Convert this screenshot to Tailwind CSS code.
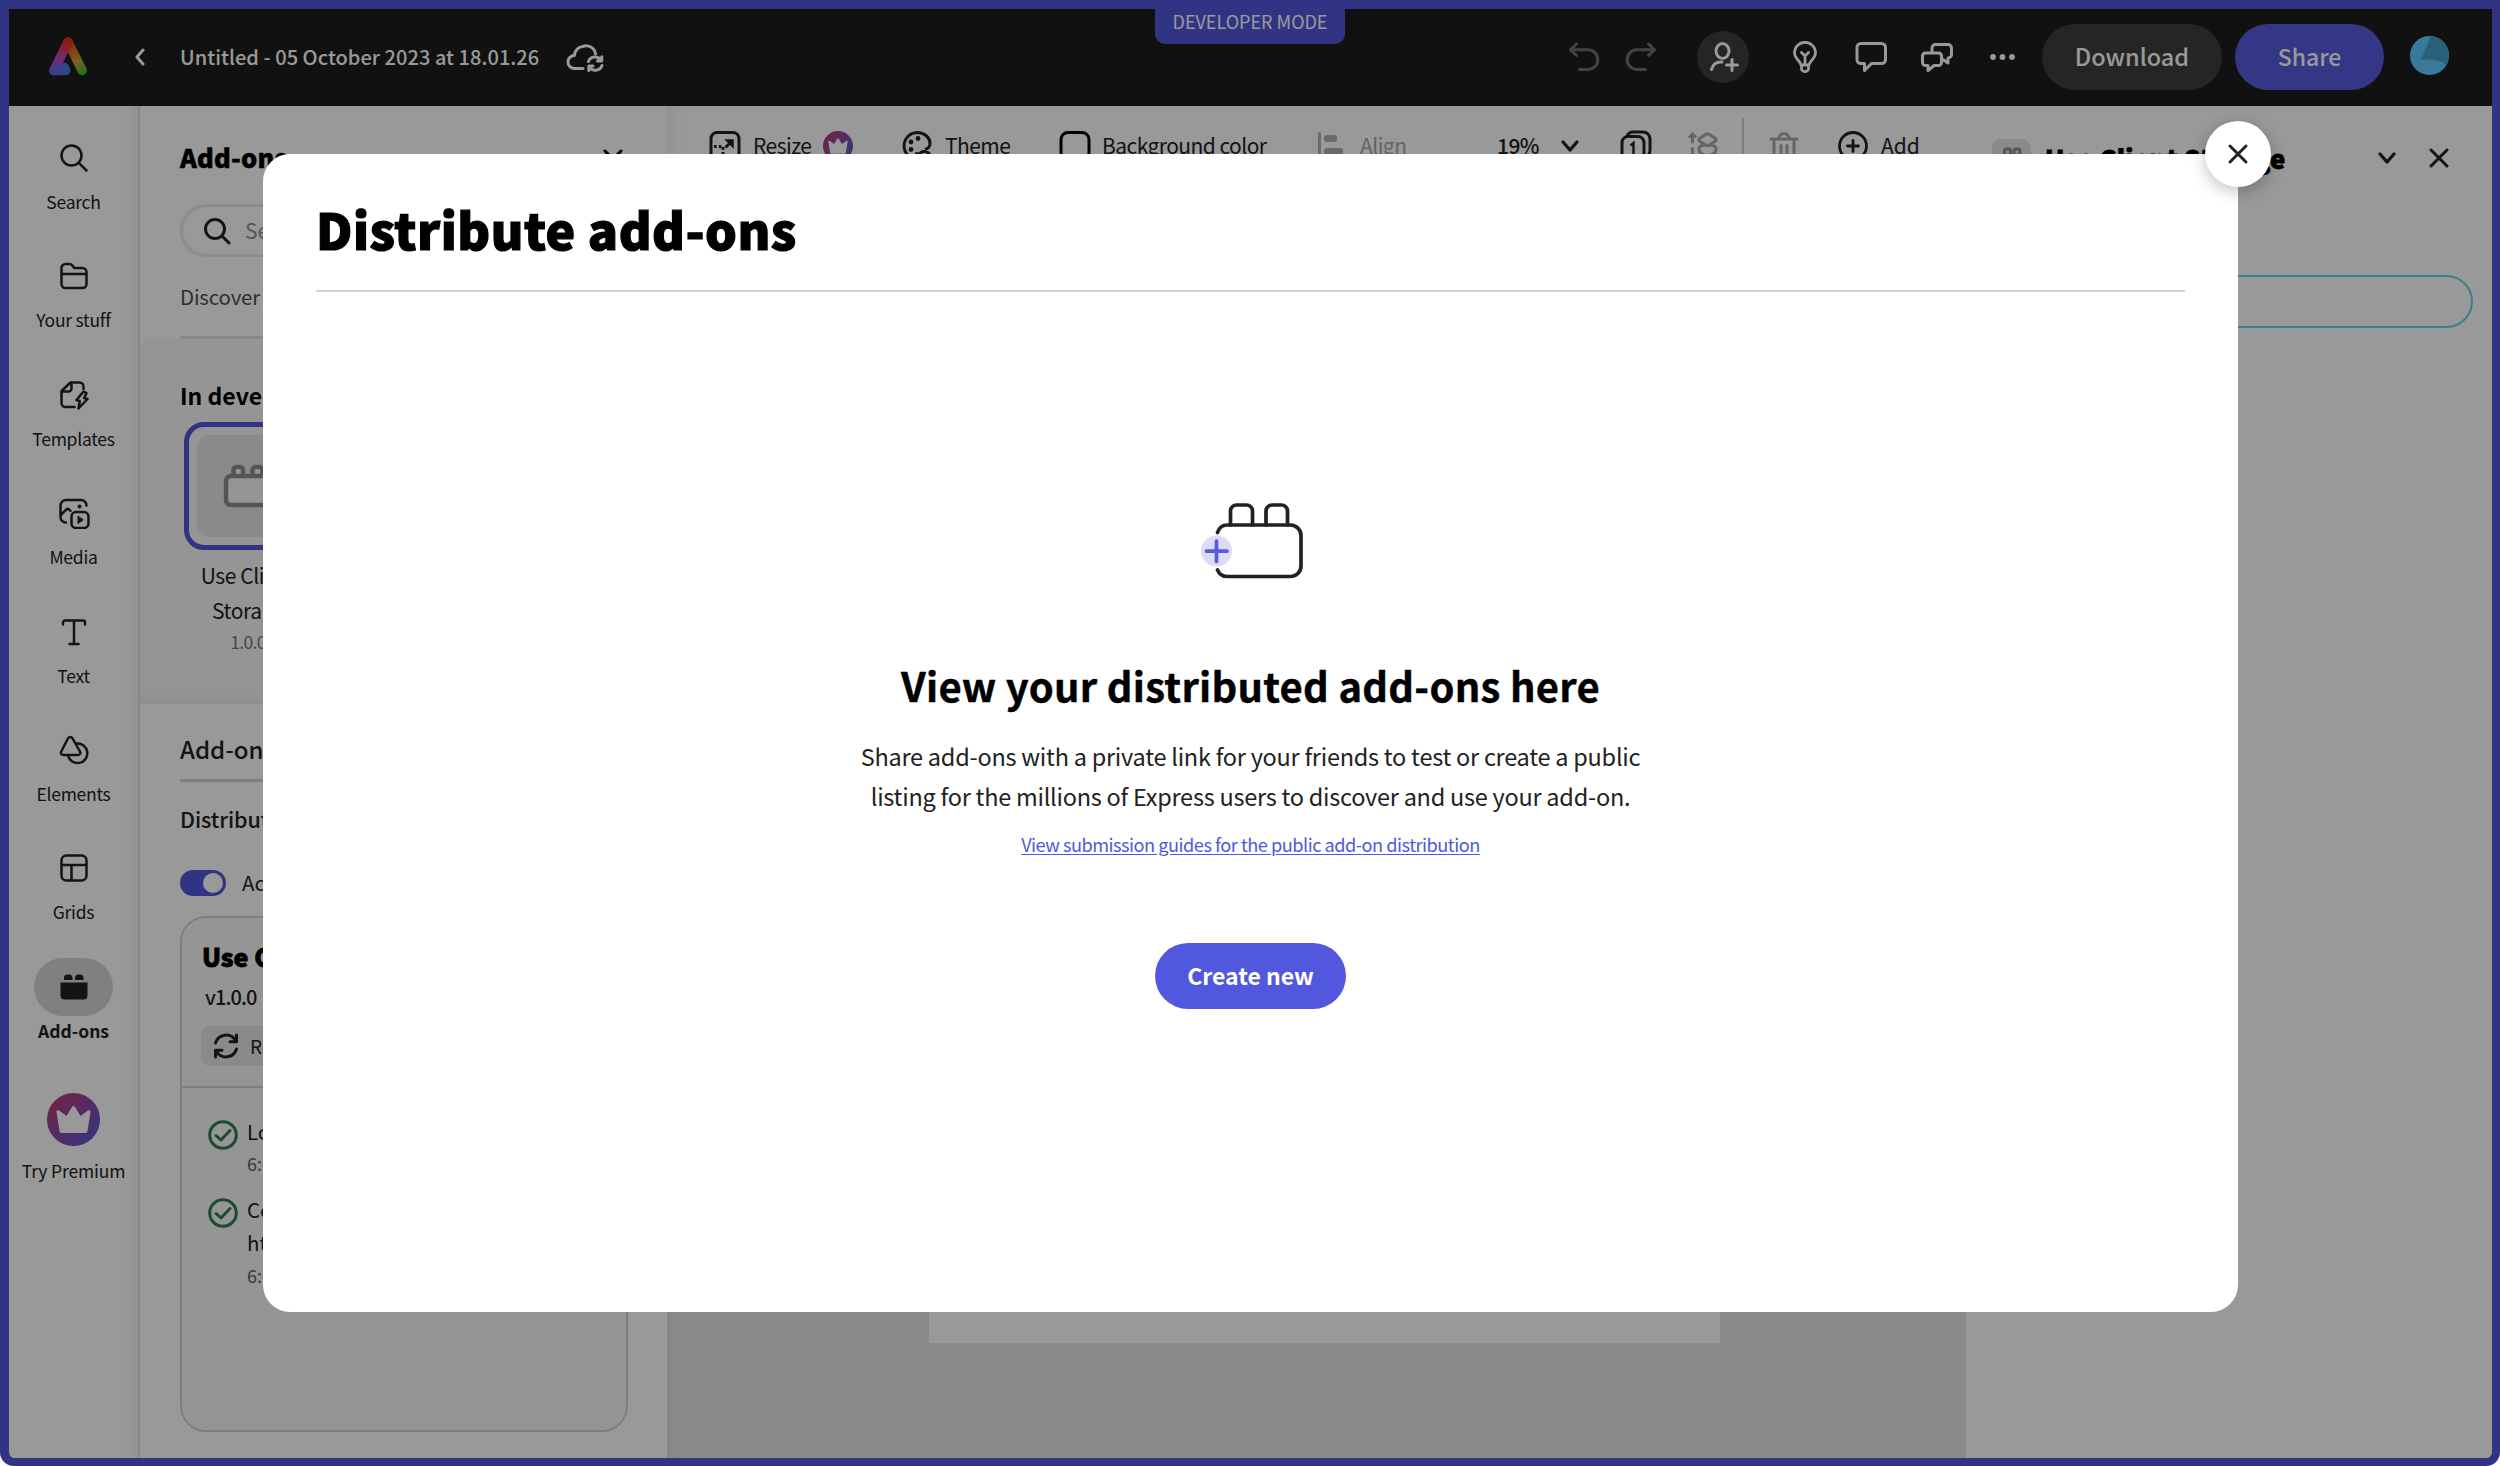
<!DOCTYPE html>
<html lang="en">
<head>
<meta charset="utf-8">
<title>Distribute add-ons</title>
<script src="https://cdn.jsdelivr.net/npm/@tailwindcss/browser@4"></script>
</head>
<body class="bg-white font-['Noto_Sans_CJK_SC','Noto_Sans',sans-serif] text-[#222] whitespace-nowrap">
<svg class="absolute size-0" aria-hidden="true">
  <defs>
    <linearGradient id="prem" x1="0" y1="0" x2="1" y2="1"><stop offset="0.1" stop-color="#b83c78"/><stop offset="1" stop-color="#5258e0"/></linearGradient>
    <linearGradient id="legL" gradientUnits="userSpaceOnUse" x1="20" y1="2" x2="8" y2="38"><stop offset="0" stop-color="#e82c10"/><stop offset=".3" stop-color="#e0364c"/><stop offset=".6" stop-color="#b84cc8"/><stop offset="1" stop-color="#6a62e0"/></linearGradient>
    <linearGradient id="legR" gradientUnits="userSpaceOnUse" x1="20" y1="2" x2="36" y2="38"><stop offset="0" stop-color="#e82c10"/><stop offset=".35" stop-color="#e06a28"/><stop offset=".65" stop-color="#c8a838"/><stop offset="1" stop-color="#3cb43c"/></linearGradient>
    <linearGradient id="foot" gradientUnits="userSpaceOnUse" x1="4" y1="34" x2="22" y2="34"><stop offset="0" stop-color="#7460e0"/><stop offset="1" stop-color="#3c80e0"/></linearGradient>
  </defs>
</svg>

<div class="relative h-[1466px] w-[2500px] overflow-hidden rounded-b-[14px] border-[8px] border-t-[9px] border-l-[9px] border-[#5258dd] bg-white">
  <div class="flex h-full flex-col">

    <!-- Header -->
    <header class="flex h-[97px] shrink-0 items-center bg-[#1d1d1d] pb-[1px] text-white">
      <svg class="mb-[2px] ml-[39px] size-[40px] shrink-0" viewBox="0 0 40 40" fill="none" stroke-linecap="round" stroke-linejoin="round" stroke-width="9.5">
        <path d="M20 6 34.2 34.6" stroke="url(#legR)"/>
        <path d="M20 6 5.8 34.6" stroke="url(#legL)"/>
        <path d="M6 34.600H17.600L16.500 31.500" stroke="url(#foot)"/>
      </svg>
      <svg class="ml-[46px] h-[18px] w-[12px] shrink-0" viewBox="0 0 12 18" fill="none" stroke="currentColor" stroke-width="3" stroke-linecap="round" stroke-linejoin="round"><path d="M9 2 3 9l6 7"/></svg>
      <span class="ml-[34px] w-[359px] shrink-0 text-[20px] font-medium tracking-[0.04px]">Untitled - 05 October 2023 at 18.01.26</span>
      <svg class="ml-[27px] h-[30px] w-[40px] shrink-0" viewBox="0 0 40 30" fill="none" stroke="currentColor" stroke-width="3" stroke-linecap="round" stroke-linejoin="round">
        <path d="M17 26.5H8.500A6.500 6.500 0 0 1 8.500 13.500 9.200 9.200 0 0 1 16.500 4.500 9.500 9.500 0 0 1 29.500 12"/>
        <path d="M22.500 19.500a7 7 0 0 1 12.500-1.200M35.800 14.800V19H31.500M36 23.500a7 7 0 0 1-12.500 1.500M22.800 28.500V24H27"/>
      </svg>
      <div class="ml-auto flex shrink-0 items-center">
        <svg class="h-[30px] w-[32px] text-[#707070]" viewBox="0 0 32 30" fill="none" stroke="currentColor" stroke-width="3" stroke-linecap="round" stroke-linejoin="round"><path d="M8.500 2 2.500 7.800 8.500 13.500M3 7.800H20a9.800 9.800 0 0 1 0 19.600H11.500"/></svg>
        <svg class="ml-[25px] h-[30px] w-[32px] text-[#707070]" viewBox="0 0 32 30" fill="none" stroke="currentColor" stroke-width="3" stroke-linecap="round" stroke-linejoin="round"><path d="M23.500 2 29.500 7.800 23.500 13.500M29 7.800H12a9.800 9.800 0 0 0 0 19.600h8.500"/></svg>
        <div class="ml-[40px] flex size-[52px] items-center justify-center rounded-full bg-[#3e3e3e]">
          <svg class="h-[32px] w-[32px]" viewBox="0 0 32 32" fill="none" stroke="currentColor" stroke-width="3" stroke-linecap="round"><ellipse cx="15.500" cy="10" rx="6.500" ry="7.500"/><path d="M4.500 28.500c1.500-5.500 5-8 10.500-7.500M25 18.500V29.500M19.500 24H30.500"/></svg>
        </div>
        <svg class="ml-[43px] h-[32px] w-[26px]" viewBox="0 0 26 32" fill="none" stroke="currentColor" stroke-width="2.800" stroke-linecap="round" stroke-linejoin="round"><path d="M9 24C8.500 20 2.500 17.500 2.500 11.800a10.500 10.500 0 0 1 21 0C23.500 17.500 17.500 20 17 24ZM9.500 24.500V27.500a3 3 0 0 0 3 3h1a3 3 0 0 0 3-3V24.500M13 23V15M9.500 11.500 13 15 16.500 11.500"/></svg>
        <svg class="ml-[37px] h-[32px] w-[32px]" viewBox="0 0 32 32" fill="none" stroke="currentColor" stroke-width="3" stroke-linejoin="round"><path d="M6 2.500H26.500a4 4 0 0 1 4 4V18.500a4 4 0 0 1-4 4H16.500L9.500 29.500V22.500H6a4 4 0 0 1-4-4V6.500a4 4 0 0 1 4-4Z"/></svg>
        <svg class="ml-[34px] h-[32px] w-[32px]" viewBox="0 0 32 32" fill="none" stroke="currentColor" stroke-width="3" stroke-linejoin="round" stroke-linecap="round"><path d="M4.500 12H17.500a3 3 0 0 1 3 3V21.500a3 3 0 0 1-3 3H13L7 29.500V24.500H4.500a3 3 0 0 1-3-3V15a3 3 0 0 1 3-3ZM11 11.500V7a3.500 3.500 0 0 1 3.500-3.500H27A3.500 3.500 0 0 1 30.500 7V13.500A3.500 3.500 0 0 1 27 17V22L22 18.500"/></svg>
        <svg class="ml-[35px] h-[8px] w-[30px]" viewBox="0 0 30 8" fill="currentColor"><circle cx="5" cy="4" r="2.900"/><circle cx="14.500" cy="4" r="2.900"/><circle cx="24" cy="4" r="2.900"/></svg>
        <div class="ml-[24px] flex h-[66px] w-[180px] items-center justify-center rounded-full bg-[#3e3e3e] text-[23.500px] font-medium">Download</div>
        <div class="ml-[13px] flex h-[66px] w-[149px] items-center justify-center rounded-full bg-[#585de0] pb-[1px] text-[23px] font-medium">Share</div>
        <svg class="mr-[43px] mb-[3px] ml-[26px] size-[39px]" viewBox="0 0 39 39"><circle cx="19.500" cy="19.500" r="19.500" fill="#5fcaff"/><path d="M21 .1A19.500 19.500 0 0 1 36 30C34 25 28 23.500 11 23.500Z" fill="#46a0c8"/></svg>
      </div>
    </header>

    <div class="flex min-h-0 flex-1">
      <!-- Navigation rail -->
      <nav class="flex w-[131px] shrink-0 flex-col items-center border-r-2 border-[#e1e1e1] pt-[23px] text-[17.500px] leading-[24px] tracking-[-0.25px] shadow-[inset_-14px_0_14px_-12px_rgba(0,0,0,0.06)]">
        <div class="flex h-[118.400px] flex-col items-center gap-[3px]"><div class="flex h-[58px] w-[79px] items-center justify-center"><svg class="size-[30px]" viewBox="0 0 30 30" fill="none" stroke="currentColor" stroke-width="2.500" stroke-linecap="round"><circle cx="12.500" cy="12.500" r="10"/><path d="M19.800 19.800 27.500 27.500"/></svg></div>Search</div>
        <div class="flex h-[118.400px] flex-col items-center gap-[3px]"><div class="flex h-[58px] w-[79px] items-center justify-center"><svg class="size-[30px]" viewBox="0 0 30 30" fill="none" stroke="currentColor" stroke-width="2.500" stroke-linejoin="round"><path d="M2.500 12V7a4 4 0 0 1 4-4H10.500c1.200 0 2 .4 2.800 1.300L15.200 7H23.500a4 4 0 0 1 4 4V23a4 4 0 0 1-4 4H6.500a4 4 0 0 1-4-4V12M2.500 13H27.500"/></svg></div>Your stuff</div>
        <div class="flex h-[118.400px] flex-col items-center gap-[3px]"><div class="flex h-[58px] w-[79px] items-center justify-center"><svg class="size-[30px]" viewBox="0 0 30 30" fill="none" stroke="currentColor" stroke-width="2.500" stroke-linejoin="round" stroke-linecap="round"><path d="M24.500 9V6.500a4 4 0 0 0-4-4H11.500L2.500 11V23a4 4 0 0 0 4 4H15.500M12.500 2.500V8.500a3 3 0 0 1-3 3H2.500M24.500 11.500 17.500 20 20.800 21 19.500 28.500 28.500 19 25.200 18 27.500 13Z"/></svg></div>Templates</div>
        <div class="flex h-[118.400px] flex-col items-center gap-[3px]"><div class="flex h-[58px] w-[79px] items-center justify-center"><svg class="size-[32px]" viewBox="0 0 32 32" fill="none" stroke="currentColor" stroke-width="2.500" stroke-linejoin="round" stroke-linecap="round"><path d="M8 25.500A5.500 5.500 0 0 1 2.500 20V8.500A5.500 5.500 0 0 1 8 3H23A5.500 5.500 0 0 1 28.500 8.500M2.800 18 8 12.800a2.500 2.500 0 0 1 3.500 0L12.500 13.800"/><circle cx="21.500" cy="9.500" r="2" fill="currentColor" stroke="none"/><rect x="13.500" y="15" width="17" height="16" rx="4.500"/><path d="M20 19.500V26.500L25 23Z" fill="currentColor" stroke-width="1"/></svg></div>Media</div>
        <div class="flex h-[118.400px] flex-col items-center gap-[3px]"><div class="flex h-[58px] w-[79px] items-center justify-center"><svg class="size-[30px]" viewBox="0 0 30 30" fill="none" stroke="currentColor" stroke-width="2.500" stroke-linejoin="round" stroke-linecap="round"><path d="M4 7.500V5.500A2 2 0 0 1 6 3.500H24A2 2 0 0 1 26 5.500V7.500M15 3.500V27M10.500 27H19.500"/></svg></div>Text</div>
        <div class="flex h-[118.400px] flex-col items-center gap-[3px]"><div class="flex h-[58px] w-[79px] items-center justify-center"><svg class="size-[30px]" viewBox="0 0 30 30" fill="none" stroke="currentColor" stroke-width="2.500" stroke-linejoin="round" stroke-linecap="round"><path d="M9 3.300 2.300 16.500A2.300 2.300 0 0 0 4.300 20H19A2.300 2.300 0 0 0 21 16.500L13.500 3.300A2.600 2.600 0 0 0 9 3.300ZM17.500 8.500A9.800 9.800 0 1 1 9 20.500"/></svg></div>Elements</div>
        <div class="flex h-[118.400px] flex-col items-center gap-[3px]"><div class="flex h-[58px] w-[79px] items-center justify-center"><svg class="size-[30px]" viewBox="0 0 30 30" fill="none" stroke="currentColor" stroke-width="2.500"><rect x="2.500" y="2.500" width="25" height="25" rx="5"/><path d="M2.500 12H27.500M12.500 12V27.500"/></svg></div>Grids</div>
        <div class="flex h-[118.400px] flex-col items-center gap-[3px] font-bold tracking-normal"><div class="flex h-[58px] w-[79px] items-center justify-center rounded-full bg-[#d5d5d5]"><svg class="size-[30px]" viewBox="0 0 30 30" fill="currentColor"><path d="M5 8V6A3.500 3.500 0 0 1 8.500 2.500H10A3.500 3.500 0 0 1 13.500 6V8ZM16 8V6A3.500 3.500 0 0 1 19.500 2.500H21A3.500 3.500 0 0 1 24.500 6V8ZM1.500 10.500H28.500V23.500a4 4 0 0 1-4 4H5.500a4 4 0 0 1-4-4Z"/></svg></div>Add-ons</div>
        <svg class="mt-[17px] size-[53px]" viewBox="0 0 53 53"><circle cx="26.500" cy="26.500" r="26.500" fill="url(#prem)"/><path d="M9.500 19c-.5-1.500 1.200-2.300 2.500-1.400L19.500 23 25 14c.7-1.300 2.300-1.300 3 0L33.500 23 41 17.600c1.300-.9 3-.1 2.500 1.400L40.500 38c-.2 1.200-1 2-2.200 2H14.700c-1.200 0-2-.8-2.200-2Z" fill="#fff"/></svg>
        <span class="mt-[13px] tracking-[-0.15px]">Try Premium</span>
      </nav>

      <!-- Add-ons panel -->
      <section class="flex w-[527px] shrink-0 flex-col">
        <div class="flex h-[233px] flex-col pl-[40px] pr-[40px]">
          <div class="mt-[35px] flex h-[32px] items-center justify-between text-[25.500px] leading-[32px] font-black tracking-[0.2px] text-black [-webkit-text-stroke:0.5px_black]">Add-ons
            <svg class="mr-[3px] mb-[4px] h-[14px] w-[22px]" viewBox="0 0 22 14" fill="none" stroke="currentColor" stroke-width="3" stroke-linecap="round" stroke-linejoin="round"><path d="M3 3 11 11 19 3"/></svg>
          </div>
          <div class="mt-[31px] flex h-[53px] shrink-0 items-center rounded-full border-[3px] border-[#eaeaea] pl-[20px] text-[21px] text-[#909090]">
            <svg class="size-[28px] text-[#222]" viewBox="0 0 28 28" fill="none" stroke="currentColor" stroke-width="3" stroke-linecap="round"><circle cx="12" cy="12" r="9.500"/><path d="M19 19 26 26"/></svg>
            <span class="ml-[14px]">Search</span>
          </div>
          <div class="mt-[23px] text-[20.500px] leading-[32px] tracking-[-0.2px] text-[#505050]">Discover</div>
          <div class="mt-auto h-[3px] bg-[#e4e4e4]"></div>
        </div>
        <div class="flex h-[365px] flex-col bg-[#f8f8f8] pl-[40px] shadow-[inset_0_-14px_14px_-12px_rgba(0,0,0,0.08)]">
          <div class="mt-[41px] text-[23px] leading-[30px] font-bold text-black">In development</div>
          <div class="mt-[12px] ml-[4px] flex w-[128px] flex-col items-center">
            <div class="flex size-[128px] items-center justify-center rounded-[20px] border-[5px] border-[#5258dd]">
              <div class="flex size-[102px] items-center justify-center rounded-[13px] bg-[#e6e6e6]">
                <svg class="h-[44px] w-[50px]" viewBox="0 0 50 44" fill="#f8f8f8" stroke="#8e8e8e" stroke-width="4.500"><path d="M10.500 12V6A3 3 0 0 1 13.500 3H17A3 3 0 0 1 20 6V12M29.500 12V6A3 3 0 0 1 32.500 3H36A3 3 0 0 1 39.500 6V12"/><rect x="3" y="12" width="44" height="29" rx="5"/></svg>
              </div>
            </div>
            <div class="mt-[8px] text-[21px] leading-[34.500px] tracking-[-0.4px]">Use Client</div>
            <div class="text-[21px] leading-[34.500px] tracking-[-0.4px]">Storage</div>
            <div class="mt-[1px] text-[17.500px] leading-[28px] tracking-[-0.7px] text-[#757575]">1.0.0</div>
          </div>
        </div>
        <div class="flex min-h-0 flex-1 flex-col pr-[39px] pb-[26px] pl-[40px]">
          <div class="mt-[30px] text-[24px] leading-[30px] font-medium">Add-on development</div>
          <div class="mt-[15px] h-[3px] shrink-0 rounded-full bg-[#d3d3d3]"></div>
          <div class="mt-[22px] text-[21.500px] leading-[30px] font-medium tracking-[-0.1px]">Distribute</div>
          <div class="mt-[29px] flex h-[40px] shrink-0 items-center text-[20.500px]">
            <span class="flex h-[26px] w-[46px] items-center justify-end rounded-full bg-[#5258dd] pr-[3px]"><span class="size-[20px] rounded-full bg-white"></span></span>
            <span class="mb-[2px] ml-[16px]">Active</span>
          </div>
          <div class="mt-[13px] flex flex-1 flex-col rounded-[26px] border-2 border-[#d3d3d3] bg-[#f8f8f8]">
            <div class="flex h-[170px] shrink-0 flex-col border-b-2 border-[#d3d3d3] pl-[19px]">
              <div class="mt-[23px] pl-[1px] text-[25px] leading-[30px] font-black text-black [-webkit-text-stroke:0.8px_black]">Use Client Storage</div>
              <div class="mt-[13px] pl-[4px] text-[20px] leading-[26px] font-medium tracking-[-0.9px]">v1.0.0</div>
              <div class="mt-[16px] flex h-[40px] w-[140px] items-center rounded-[9px] bg-[#e6e6e6] text-[19px]">
                <svg class="ml-[11px] size-[28px]" viewBox="0 0 28 28" fill="none" stroke="currentColor" stroke-width="3" stroke-linecap="round" stroke-linejoin="round"><path d="M3.500 11A11 11 0 0 1 23.500 8.500M24.500 3V9.800H18M24.500 17A11 11 0 0 1 4.500 19.500M3.500 25V18.200H10"/></svg>
                <span class="ml-[10px]">Refresh</span>
              </div>
            </div>
            <div class="mt-[31px] flex pl-[26px] leading-[32px]">
              <svg class="mt-[1px] size-[30px]" viewBox="0 0 30 30" fill="none" stroke="#2d7d50" stroke-width="3" stroke-linecap="round" stroke-linejoin="round"><circle cx="15" cy="15" r="13.300"/><path d="M8 15.500 13 20 22 10.500"/></svg>
              <div class="-mt-[4px] ml-[9px] text-[20.500px]">Loaded<div class="text-[18px] leading-[32px] text-[#606060]">6:01:20</div></div>
            </div>
            <div class="mt-[18px] flex pl-[26px] leading-[33px]">
              <svg class="mt-[1px] size-[30px]" viewBox="0 0 30 30" fill="none" stroke="#2d7d50" stroke-width="3" stroke-linecap="round" stroke-linejoin="round"><circle cx="15" cy="15" r="13.300"/><path d="M8 15.500 13 20 22 10.500"/></svg>
              <div class="-mt-[4px] ml-[9px] text-[20.500px]">Connected<div>https</div><div class="text-[18px] leading-[33px] text-[#606060]">6:01:20</div></div>
            </div>
          </div>
        </div>
      </section>

      <!-- Editor -->
      <main class="flex min-w-0 flex-1 flex-col bg-[#e6e6e6] shadow-[inset_14px_0_14px_-12px_rgba(0,0,0,0.06)]">
        <div class="flex h-[80px] shrink-0 items-center bg-white pl-[42px] text-[21px] tracking-[-0.55px] shadow-[inset_14px_0_14px_-10px_rgba(0,0,0,0.06)]">
          <svg class="h-[30px] w-[32px] shrink-0" viewBox="0 0 32 30" fill="none" stroke="currentColor" stroke-width="3"><rect x="2" y="1.500" width="28" height="27" rx="6"/><path d="M17 9H24V16Z" fill="currentColor" stroke-width="1.500"/><path d="M21 12 16.500 16.500"/><path d="M5 15.500H14V25" stroke-dasharray="2.600 2.200"/></svg>
          <span class="ml-[12px] w-[60px] shrink-0">Resize</span>
          <svg class="ml-[10px] size-[30px] shrink-0" viewBox="0 0 53 53"><circle cx="26.500" cy="26.500" r="26.500" fill="url(#prem)"/><path d="M9.500 19c-.5-1.500 1.200-2.300 2.500-1.400L19.500 23 25 14c.7-1.300 2.300-1.300 3 0L33.500 23 41 17.600c1.300-.9 3-.1 2.500 1.400L40.500 38c-.2 1.200-1 2-2.200 2H14.700c-1.200 0-2-.8-2.200-2Z" fill="#fff"/></svg>
          <svg class="ml-[49px] size-[30px] shrink-0" viewBox="0 0 30 30" fill="none" stroke="currentColor" stroke-width="3"><path d="M15 1.500A13.300 13.300 0 1 0 16 28.300c3 0 2-3.500 2-5 0-3 4-3 6-3l4 3M15 1.500c7.500 0 13 5 13 11 0 4-2 5-5 6"/><g fill="currentColor" stroke="none"><circle cx="9" cy="11" r="2.400"/><circle cx="16" cy="7.500" r="2.400"/><circle cx="9" cy="18.500" r="2.400"/><circle cx="15" cy="23.500" r="2.400"/></g></svg>
          <span class="ml-[13px] w-[66px] shrink-0">Theme</span>
          <svg class="ml-[48px] h-[30px] w-[32px] shrink-0" viewBox="0 0 32 30" fill="none" stroke="#000" stroke-width="3"><rect x="2" y="1.500" width="28" height="27" rx="7"/></svg>
          <span class="ml-[11px] w-[167px] shrink-0">Background color</span>
          <svg class="ml-[49px] h-[28px] w-[26px] shrink-0" viewBox="0 0 26 28" fill="#b0b0b0"><rect x="0" y="0" width="3" height="28" rx="1.500"/><rect x="6" y="3" width="13" height="7" rx="3"/><rect x="6" y="16" width="19" height="7" rx="3"/></svg>
          <span class="ml-[16px] w-[48px] shrink-0 text-[#a8a8a8]">Align</span>
          <span class="ml-[89px] w-[41px] shrink-0 font-medium">19%</span>
          <svg class="ml-[22px] h-[14px] w-[20px] shrink-0" viewBox="0 0 20 14" fill="none" stroke="currentColor" stroke-width="3.300" stroke-linecap="round" stroke-linejoin="round"><path d="M3 3 10 11 17 3"/></svg>
          <svg class="ml-[40px] h-[32px] w-[32px] shrink-0" viewBox="0 0 32 32" fill="none" stroke="currentColor" stroke-width="3"><path d="M7 6.500C8 3.500 10 2 13 2H23A7 7 0 0 1 30 9V20C30 23 28.500 25.500 26 26.500"/><rect x="2" y="6.500" width="22" height="24" rx="6"/><path d="M10.500 15.500 13.500 13V25" stroke-width="2.400"/></svg>
          <svg class="ml-[34px] h-[32px] w-[36px] shrink-0 text-[#a8a8a8]" viewBox="0 0 36 32" fill="none" stroke="currentColor" stroke-width="3" stroke-linejoin="round" stroke-linecap="round"><path d="M6.500 12V6M6.500 18.500V28"/><path d="M2.800 7 6.500 3 10.200 7ZM2.800 25 6.500 29 10.200 25Z" fill="currentColor" stroke-width="1.500"/><path d="M20 4.200a3 3 0 0 1 3 0L29.500 8.500a1.500 1.500 0 0 1 0 2.500L23 15.200a3 3 0 0 1-3 0L13.500 11a1.500 1.500 0 0 1 0-2.500ZM18.500 14.800C14 16 12.500 17.500 13 19L13.500 22 20 26.500a3 3 0 0 0 3 0L29.500 22 30 19C30.500 17.500 29 16 24.500 14.800"/></svg>
          <div class="ml-[20px] h-[56px] w-[2px] shrink-0 bg-[#d0d0d0]"></div>
          <svg class="ml-[24px] h-[30px] w-[32px] shrink-0 text-[#a8a8a8]" viewBox="0 0 32 30" fill="none" stroke="currentColor" stroke-width="3" stroke-linecap="round" stroke-linejoin="round"><path d="M3 8H29M11 7.500A5 5 0 0 1 21 7.500M6 8V28.500H26V8M13 14.500V23M19 14.500V23"/></svg>
          <svg class="ml-[38px] size-[30px] shrink-0" viewBox="0 0 30 30" fill="none" stroke="currentColor" stroke-width="2.800" stroke-linecap="round"><circle cx="15" cy="15" r="13.500"/><path d="M15 9.500V20.500M9.500 15H20.500"/></svg>
          <span class="ml-[13px] tracking-normal">Add</span>
        </div>
        <div class="mt-[40px] ml-[262px] h-[1117px] w-[791px] shrink-0 bg-white"></div>
      </main>

      <!-- Add-on panel -->
      <aside class="flex w-[526px] shrink-0 flex-col bg-white">
        <div class="mt-[32px] flex h-[40px] shrink-0 items-center pl-[26px]">
          <div class="flex size-[39px] items-center justify-center rounded-[9px] bg-[#e6e6e6]"><svg class="h-[22px] w-[24px]" viewBox="0 0 24 22" fill="none" stroke="#8e8e8e" stroke-width="3"><path d="M4.500 8V4A2 2 0 0 1 6.500 2H8.500A2 2 0 0 1 10.500 4V8M14 8V4A2 2 0 0 1 16 2H18A2 2 0 0 1 20 4V8"/><rect x="2" y="8" width="20" height="12" rx="2"/></svg></div>
          <span class="ml-[14px] w-[240px] text-[25.500px] font-black tracking-[0.28px] text-black [-webkit-text-stroke:0.8px_black]">Use Client Storage</span>
          <svg class="ml-[92px] h-[14px] w-[20px]" viewBox="0 0 20 14" fill="none" stroke="currentColor" stroke-width="3.300" stroke-linecap="round" stroke-linejoin="round"><path d="M3 3 10 11 17 3"/></svg>
          <svg class="ml-[32px] size-[20px]" viewBox="0 0 20 20" fill="none" stroke="currentColor" stroke-width="3" stroke-linecap="round"><path d="M2 2 18 18M18 2 2 18"/></svg>
        </div>
        <div class="mt-[97px] mr-[19px] ml-[20px] h-[53px] rounded-full border-2 border-[#62d4dc]"></div>
      </aside>
    </div>
  </div>

  <!-- Developer badge -->
  <div class="absolute top-0 left-[1146px] flex h-[35px] w-[190px] items-center justify-center rounded-b-[10px] bg-[#5258dd] pb-[10px] text-[18px] text-white">DEVELOPER MODE</div>
</div>

<!-- Backdrop -->
<div class="absolute inset-0 rounded-b-[14px] bg-black/40"></div>

<!-- Dialog -->
<div role="dialog" class="absolute top-[154px] left-[263px] flex h-[1158px] w-[1975px] flex-col items-center rounded-[27px] bg-white">
  <div class="flex h-[138px] w-[1869px] shrink-0 items-center border-b-2 border-[#d3d3d3] pt-[17px] pb-[5px] text-[50px] leading-[60px] font-black tracking-[0.5px] text-black [-webkit-text-stroke:1.2px_black]">
    <h1>Distribute add-ons</h1>
  </div>
  <svg class="mt-[207px] mr-[1px] h-[82px] w-[110px] shrink-0" viewBox="0 0 110 82" fill="none" stroke="#222" stroke-width="3.700" stroke-linecap="round">
    <path d="M22.500 33.500C24 29 27.500 26 32 26H95.500A10.500 10.500 0 0 1 106 36.500V66.500A10.500 10.500 0 0 1 95.500 77.500H32C27.500 77.500 24 74.500 22.500 71"/>
    <path d="M35.500 26V12A6 6 0 0 1 41.500 6H51.500A6 6 0 0 1 57.500 12V26M71 26V12A6 6 0 0 1 77 6H86.500A6 6 0 0 1 92.500 12V26"/>
    <circle cx="21.500" cy="52" r="15.500" fill="#dddcf7" stroke="none"/><path d="M21.500 42V62.500M11.500 52.200H32" stroke="#5a5bdc"/>
  </svg>
  <h2 class="mt-[76px] text-[40px] leading-[56px] font-bold tracking-[0.25px] text-black [-webkit-text-stroke:0.4px_black]">View your distributed add-ons here</h2>
  <p class="mt-[24px] text-center text-[23.500px] leading-[39.500px] tracking-[-0.25px]">Share add-ons with a private link for your friends to test or create a public<br>listing for the millions of Express users to discover and use your add-on.</p>
  <a class="mt-[14px] text-[18.200px] leading-[28px] tracking-[-0.5px] text-[#5258dd] underline underline-offset-2">View submission guides for the public add-on distribution</a>
  <button class="mt-[85px] h-[66px] w-[191px] shrink-0 rounded-full bg-[#5258dd] pb-[1px] text-[23px] font-bold text-white">Create new</button>
</div>
<button class="absolute top-[121px] left-[2205px] flex size-[66px] items-center justify-center rounded-full bg-white shadow-[0_4px_16px_rgba(0,0,0,0.25)]">
  <svg class="size-[22px]" viewBox="0 0 22 22" fill="none" stroke="#222" stroke-width="3" stroke-linecap="round"><path d="M3 3 19 19M19 3 3 19"/></svg>
</button>
</body>
</html>
